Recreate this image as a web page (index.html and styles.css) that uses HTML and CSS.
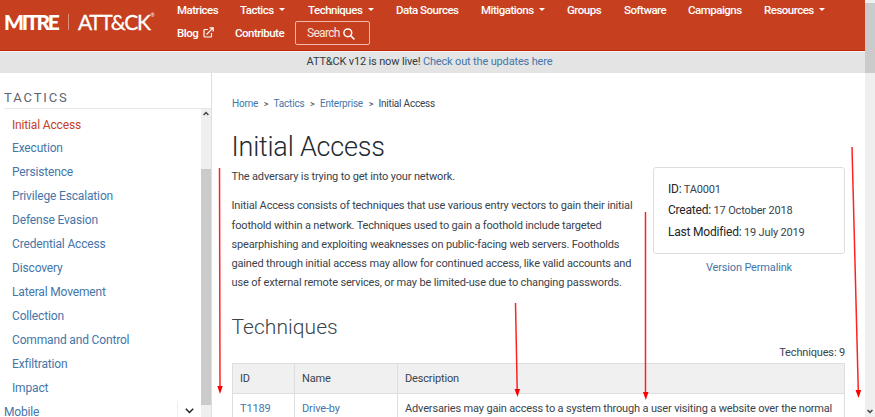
FILE: index.html
```html
<!DOCTYPE html>
<html lang="en">
<head>
<meta charset="utf-8">
<title>Initial Access, Tactic TA0001 - Enterprise | MITRE ATT&amp;CK</title>
<link rel="stylesheet" href="styles.css">
</head>
<body>
<div class="page">
  <header class="header">
    <a class="logo"><span class="mitre">MITRE</span><span class="rule"></span><span class="attack">ATT&amp;CK</span><span class="reg">®</span></a>
    <nav class="nav">
      <div class="row">
        <a class="w63">Matrices</a>
        <a class="w68 drop">Tactics</a>
        <a class="w88 drop">Techniques</a>
        <a class="w85">Data Sources</a>
        <a class="w86 drop">Mitigations</a>
        <a class="w57">Groups</a>
        <a class="w64">Software</a>
        <a class="w76">Campaigns</a>
        <a class="drop">Resources</a>
      </div>
      <div class="row second">
        <a class="blog">Blog <svg width="11" height="11" viewBox="0 0 11 11"><path d="M5 2.5H2Q1 2.5 1 3.5V9Q1 10 2 10H7.5Q8.500 10 8.500 9V6M3.500 7.500L9.800 1.200M6.500 .8H10.200V4.500"/></svg></a>
        <a class="contribute">Contribute</a>
        <button class="search">Search <svg width="12" height="12" viewBox="0 0 12 12"><circle cx="4.800" cy="4.800" r="3.900"/><path d="M7.700 7.700L11.400 11.400"/></svg></button>
      </div>
    </nav>
  </header>
  <div class="banner"><span>ATT&amp;CK v12 is now live! <a>Check out the updates here</a></span></div>
  <div class="body">
    <aside class="side">
      <h2>TACTICS</h2>
      <div class="sidebody">
        <ul>
          <li class="active">Initial Access</li><li>Execution</li><li>Persistence</li><li>Privilege Escalation</li><li>Defense Evasion</li><li>Credential Access</li><li>Discovery</li><li>Lateral Movement</li><li>Collection</li><li>Command and Control</li><li>Exfiltration</li><li>Impact</li>
          <li class="mobile"><span>Mobile</span><i><svg width="9" height="6" viewBox="0 0 9 6"><path d="M.8 .8L4.500 4.500L8.200 .8"/></svg></i></li>
        </ul>
        <div class="sidebar-scroll"><svg width="6" height="5" viewBox="0 0 6 5"><path d="M.6 4L3 1.500L5.400 4"/></svg><div></div></div>
      </div>
    </aside>
    <main class="main">
      <div class="crumbs"><a>Home</a><b>&gt;</b><a>Tactics</a><b>&gt;</b><a>Enterprise</a><b>&gt;</b><span>Initial Access</span></div>
      <h1>Initial Access</h1>
      <div class="columns">
        <div class="text">
          <p>The adversary is trying to get into your network.</p>
          <p>Initial Access consists of techniques that use various entry vectors to gain their initial<br>foothold within a network. Techniques used to gain a foothold include targeted<br>spearphishing and exploiting weaknesses on public-facing web servers. Footholds<br>gained through initial access may allow for continued access, like valid accounts and<br>use of external remote services, or may be limited-use due to changing passwords.</p>
        </div>
        <div class="info">
          <div class="card">
            <div><b>ID:</b> TA0001</div>
            <div><b>Created:</b> 17 October 2018</div>
            <div><b>Last Modified:</b> 19 July 2019</div>
          </div>
          <a>Version Permalink</a>
        </div>
      </div>
      <h3>Techniques</h3>
      <div class="count">Techniques: 9</div>
      <table>
        <thead><tr><th class="c1">ID</th><th class="c2">Name</th><th>Description</th></tr></thead>
        <tbody><tr><td><a>T1189</a></td><td><a>Drive-by</a></td><td>Adversaries may gain access to a system through a user visiting a website over the normal</td></tr></tbody>
      </table>
    </main>
  </div>
</div>
<div class="scroll"><div class="thumb"></div><svg width="6" height="5" viewBox="0 0 6 5"><path d="M.6 1L3 3.500L5.400 1"/></svg></div>
<svg class="arrows" width="875" height="417" viewBox="0 0 875 417">
  <path class="line" d="M219.500 168L220 388M515.500 303L517.200 390M645.500 212V393M852 147L858.300 391"/>
  <path class="tip" d="M217.300 386H222.700L220 394ZM514.500 389H520L517.500 397ZM643 392H648.500L645.800 400ZM855.500 390H861.200L858.500 398Z"/>
</svg>
</body>
</html>
```
FILE: styles.css
```css
* { box-sizing: border-box; }
body { margin: 0; width: 875px; height: 417px; overflow: hidden; display: flex; position: relative; background: #fff; color: #39434c; font: 11px/19px Roboto, sans-serif; letter-spacing: -.16px; }
a { color: #4576a9; }
h1, h2, h3, p, ul { margin: 0; padding: 0; font-weight: 400; }
.page { width: 865px; height: 417px; display: flex; flex-direction: column; }
.header { height: 51px; flex: none; background: #c63f1f; border-bottom: 1px solid #bd2408; display: flex; }
.header a { color: #fff; }
.logo { width: 177px; padding-left: 4px; height: 43px; display: flex; align-items: center; font-family: Lato, sans-serif; white-space: nowrap; }
.mitre { font-size: 21px; font-weight: 900; letter-spacing: -2.200px; width: 64px; flex: none; }
.rule { width: 1px; height: 16px; background: #e1907d; margin-right: 9px; flex: none; }
.attack { font-size: 21px; letter-spacing: -1.400px; -webkit-text-stroke: .3px #fff; }
.reg { font-size: 5px; align-self: flex-start; margin: 6px 0 0 1px; }
.row { display: flex; height: 21px; font-size: 11.500px; line-height: 21px; font-weight: 500; letter-spacing: -.5px; white-space: nowrap; }
.row a { flex: none; }
.w63 { width: 63px; } .w68 { width: 68px; } .w88 { width: 88px; } .w85 { width: 85px; } .w86 { width: 86px; } .w57 { width: 57px; } .w64 { width: 64px; } .w76 { width: 76px; }
.drop::after { content: ""; display: inline-block; border: 3px solid transparent; border-top-color: #fff; border-bottom: 0; margin-left: 5.500px; vertical-align: 3px; }
.row.second { height: 25px; line-height: 24px; }
.blog { width: 58px; }
.blog svg { margin-left: 2px; vertical-align: -1px; }
svg { fill: none; stroke: #fff; stroke-width: 1.200; }
.contribute { width: 60px; }
.search { width: 75px; height: 24px; border: 1px solid #efb9ac; border-radius: 2px; background: transparent; color: #fbe4de; font: 12px/20px Roboto, sans-serif; letter-spacing: -.7px; padding: 0 0 0 11px; text-align: left; }
.search svg { margin-left: 1.500px; vertical-align: -3px; stroke-width: 1.500; }
.banner { height: 22px; flex: none; background: #e4e4e4; border-top: 1px solid #f5f5f5; text-align: center; line-height: 20px; color: #333b43; padding-right: 6px; }
.body { display: flex; flex: 1; min-height: 0; overflow: hidden; }
.side { width: 212px; flex: none; border-right: 1px solid #dedede; }
.side h2 { height: 36px; margin-left: 4px; border-bottom: 1px solid #e7e7e7; padding-top: 15px; font-size: 13px; line-height: 20px; letter-spacing: 1.900px; color: #5d666e; }
.sidebody { display: flex; }
.side ul { list-style: none; flex: 1; padding-top: 4px; }
.side li { height: 24px; padding-left: 12px; font-size: 12px; line-height: 23px; color: #4576a9; white-space: nowrap; }
.side .active { color: #c63f1f; line-height: 24px; }
.side .mobile { padding-left: 4px; display: flex; justify-content: space-between; height: 20px; }
.mobile i { width: 24px; border-left: 1px solid #eee; display: flex; align-items: center; padding-left: 7px; }
.mobile svg { stroke: #222; stroke-width: 1.500; }
.sidebar-scroll { width: 10px; height: 308px; background: #efefef; display: flex; flex-direction: column; align-items: center; padding-top: 2px; }
.sidebar-scroll svg, .scroll svg { stroke: #444; stroke-width: 1.500; }
.sidebar-scroll div { width: 10px; height: 236px; flex: none; margin-top: 53px; background: #cbcbcb; }
.main { padding: 0 20px; width: 653px; }
.crumbs { display: flex; margin-top: 22px; height: 18px; line-height: 18px; font-size: 10px; letter-spacing: -.2px; }
.crumbs b { font-weight: 400; margin: 0 5.300px 0 5.700px; font-size: 9px; }
h1 { margin-top: 15px; height: 38px; font-size: 27px; line-height: 38px; font-weight: 300; color: #22292f; letter-spacing: -.2px; text-indent: -.5px; }
.columns { display: flex; justify-content: space-between; height: 143px; }
.text { width: 410px; white-space: nowrap; padding-top: 1px; margin-left: -.5px; }
.text p { margin-bottom: 10px; line-height: 19.300px; }
.info { width: 192px; text-align: center; padding-top: 1px; }
.card { margin-bottom: 4px; height: 87px; border: 1px solid #dedede; border-radius: 3px; padding: 11px 14px; text-align: left; line-height: 21.300px; }
.card b { font-weight: 400; font-size: 12px; color: #20262b; letter-spacing: -.2px; }
h3 { height: 36px; line-height: 36px; font-size: 21px; font-weight: 300; letter-spacing: .05px; text-indent: -.5px; }
.count { text-align: right; height: 18px; line-height: 16px; }
table { width: 613px; border-collapse: collapse; table-layout: fixed; }
th, td { border: 1px solid #dedede; padding: 5px 7px; height: 30px; text-align: left; font-weight: 400; line-height: 19px; white-space: nowrap; }
th { background: #f0f0f0; }
.c1 { width: 62px; } .c2 { width: 103px; }
.scroll { width: 10px; background: #efefef; display: flex; flex-direction: column; align-items: center; justify-content: space-between; padding: 3px 0; }
.thumb { width: 10px; height: 70px; background: #cbcbcb; }
.arrows { position: absolute; left: 0; top: 0; pointer-events: none; }
.line { stroke: #f22; stroke-width: 1.500; }
.tip { fill: #f00; stroke: none; }
```
